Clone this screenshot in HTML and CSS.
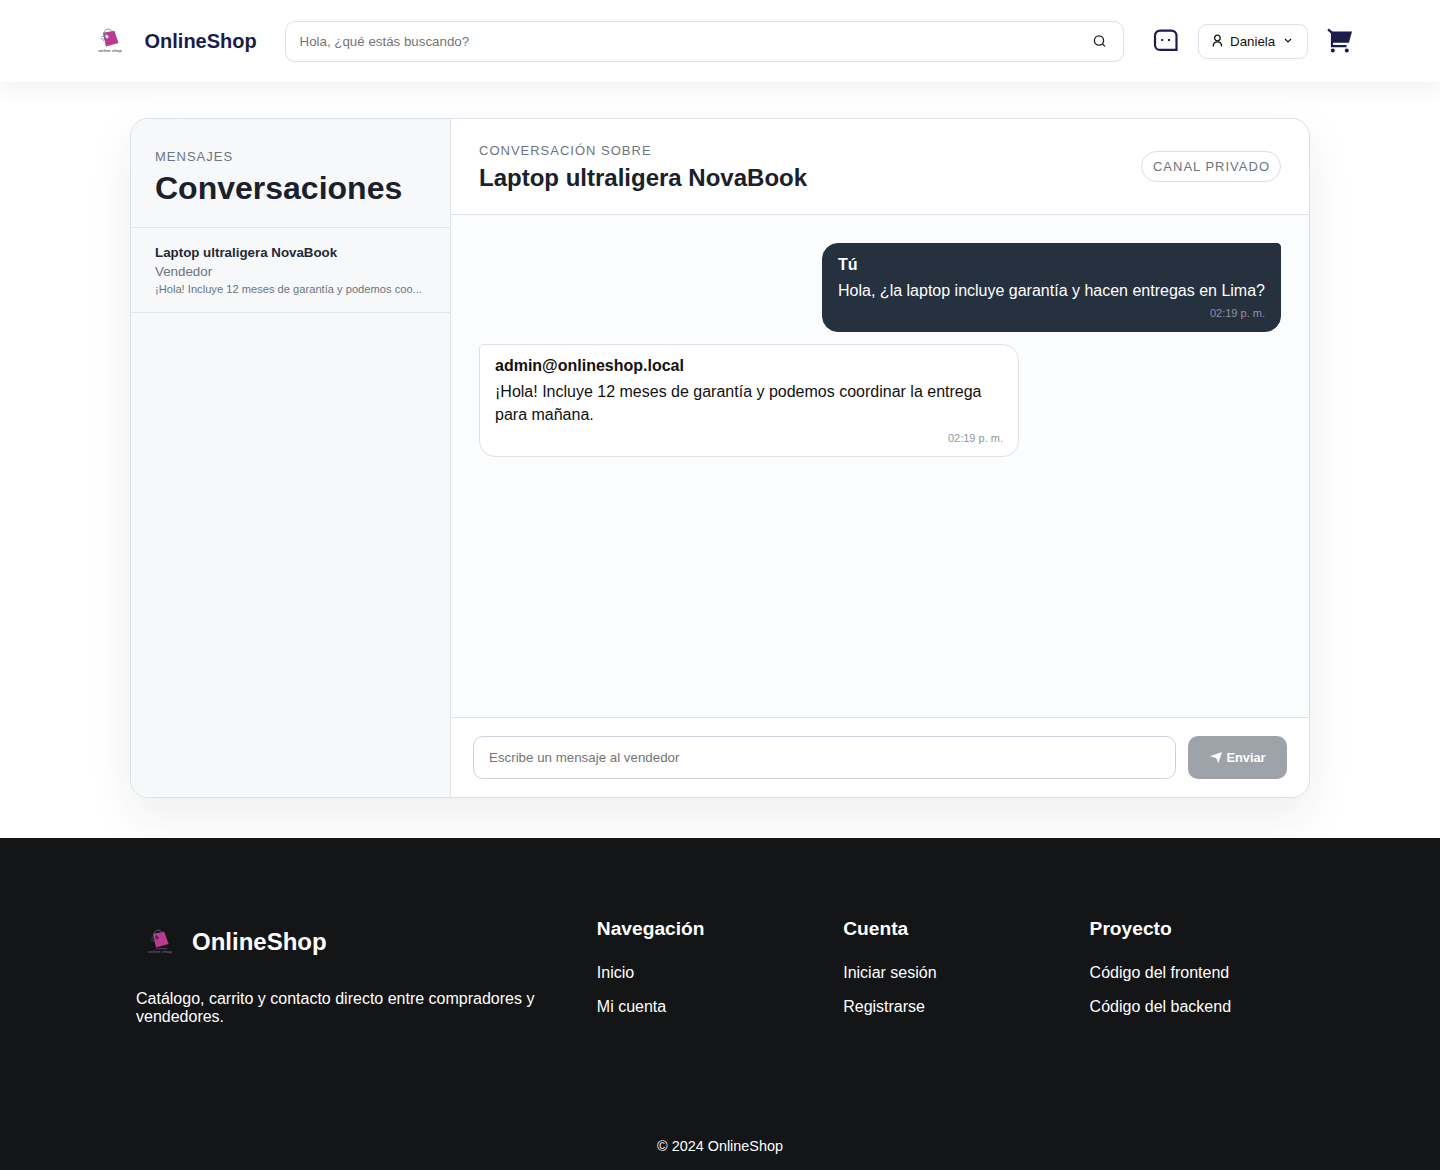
FILE: index.html
```html
<!DOCTYPE html>
<html lang="es">
<head>
    <meta charset="UTF-8">
    <meta name="viewport" content="width=device-width, initial-scale=1.0">
    <title>OnlineShop</title>
    <link rel="stylesheet" href="styles.css">
</head>
<body>
    <header class="navbar">
        <a class="brand" href="#">
            <svg class="logo" viewBox="0 0 40 40">
                <path d="M12.8 11.8 24.3 9.800 28.6 21.900 16 25.600z" fill="#b83b8f"/>
                <path d="M14.200 13.500c-1-6.500 7.200-7 7.800-2" fill="none" stroke="#8d8d99" stroke-width="1"/>
                <path d="M11.500 15.500h4M10.500 18h4M13 20l2-2" fill="none" stroke="#77778c" stroke-width=".7"/>
                <path d="M16 13l3 2.500-2 2.500-2-2.500z" fill="#dcdce4"/>
                <text x="8.300" y="30.500" font-size="4.200" font-weight="bold" textLength="23.500" fill="#66607c">online shop</text>
            </svg>
            <span>OnlineShop</span>
        </a>
        <form class="search">
            <input type="text" placeholder="Hola, ¿qué estás buscando?">
            <svg width="14" height="14" viewBox="0 0 14 14" fill="none" stroke="#18181f" stroke-width="1.300">
                <circle cx="6" cy="6.500" r="4.600"/>
                <path d="M9.400 9.900l2.500 2.500"/>
            </svg>
        </form>
        <a class="chat-link" href="#">
            <svg width="26" height="24" viewBox="0 0 26 24">
                <path d="M7 1.600h11.500a5 5 0 0 1 5 5V20.900H7a5 5 0 0 1-5-5V6.600a5 5 0 0 1 5-5z" fill="none" stroke="#1a1c4b" stroke-width="2.200"/>
                <path d="M8.200 10h2v2h-2zM15 10h2v2h-2z" fill="#1a1c4b"/>
            </svg>
        </a>
        <button class="user-btn">
            <svg width="12" height="14" viewBox="0 0 12 14" fill="none" stroke="#111" stroke-width="1.300">
                <circle cx="5.400" cy="4" r="2.800"/>
                <path d="M1.200 12.500c0-3 1.900-4.700 4.200-4.700s4.200 1.700 4.200 4.700"/>
            </svg>
            <span>Daniela</span>
            <svg class="chevron" width="8" height="6" viewBox="0 0 8 6" fill="none" stroke="#111" stroke-width="1.200">
                <path d="M1 1l3 3 3-3"/>
            </svg>
        </button>
        <a class="cart-link" href="#">
            <svg width="26" height="26" viewBox="0 0 26 26">
                <path d="M1 1.300l4 3.500v13.300h14.500" fill="none" stroke="#1a1c4b" stroke-width="2.200"/>
                <path d="M4 3.500h21l-3.100 11.300H4z" fill="#1a1c4b"/>
                <circle cx="5.800" cy="22.500" r="2" fill="#1a1c4b"/>
                <circle cx="19.800" cy="22.500" r="2" fill="#1a1c4b"/>
            </svg>
        </a>
    </header>

    <main class="chat">
        <aside class="sidebar">
            <div class="sidebar-header">
                <p class="eyebrow">MENSAJES</p>
                <h1>Conversaciones</h1>
            </div>
            <button class="conversation">
                <strong>Laptop ultraligera NovaBook</strong>
                <span>Vendedor</span>
                <small>¡Hola! Incluye 12 meses de garantía y podemos coo...</small>
            </button>
        </aside>
        <section class="panel">
            <div class="panel-header">
                <div>
                    <p class="eyebrow">CONVERSACIÓN SOBRE</p>
                    <h2>Laptop ultraligera NovaBook</h2>
                </div>
                <span class="eyebrow badge">CANAL PRIVADO</span>
            </div>
            <div class="messages">
                <article class="message mine">
                    <strong>Tú</strong>
                    <p>Hola, ¿la laptop incluye garantía y hacen entregas en Lima?</p>
                    <time>02:19 p. m.</time>
                </article>
                <article class="message">
                    <strong>admin@onlineshop.local</strong>
                    <p>¡Hola! Incluye 12 meses de garantía y podemos coordinar la entrega para mañana.</p>
                    <time>02:19 p. m.</time>
                </article>
            </div>
            <form class="composer">
                <input type="text" placeholder="Escribe un mensaje al vendedor">
                <button type="submit" disabled>
                    <svg width="13" height="13" viewBox="0 0 13 13" fill="#fff">
                        <path d="M1 5.200 13 1 9.300 12.300 7.200 7z"/>
                    </svg>
                    <span>Enviar</span>
                </button>
            </form>
        </section>
    </main>

    <footer class="footer">
        <div class="footer-grid">
            <div>
                <div class="footer-brand">
                    <svg class="logo" viewBox="0 0 40 40">
                        <path d="M12.8 11.8 24.3 9.800 28.6 21.900 16 25.600z" fill="#b83b8f"/>
                        <path d="M14.200 13.500c-1-6.500 7.200-7 7.800-2" fill="none" stroke="#5d5d70" stroke-width="1"/>
                        <path d="M11.500 15.500h4M10.500 18h4M13 20l2-2" fill="none" stroke="#5d5d78" stroke-width=".7"/>
                        <path d="M16 13l3 2.500-2 2.500-2-2.500z" fill="#3c3450"/>
                        <path d="M16 26.800l11-.2" stroke="#8a5a80" stroke-width=".6"/>
                        <text x="8.300" y="30.500" font-size="4.200" font-weight="bold" textLength="23.500" fill="#5d5878">online shop</text>
                    </svg>
                    <span>OnlineShop</span>
                </div>
                <p>Catálogo, carrito y contacto directo entre compradores y vendedores.</p>
            </div>
            <div class="footer-col">
                <h3>Navegación</h3>
                <a href="#">Inicio</a>
                <a href="#">Mi cuenta</a>
            </div>
            <div class="footer-col">
                <h3>Cuenta</h3>
                <a href="#">Iniciar sesión</a>
                <a href="#">Registrarse</a>
            </div>
            <div class="footer-col">
                <h3>Proyecto</h3>
                <a href="#">Código del frontend</a>
                <a href="#">Código del backend</a>
            </div>
        </div>
        <p class="copyright">© 2024 OnlineShop</p>
    </footer>
</body>
</html>
```
FILE: styles.css
```css
* {
    margin: 0;
    padding: 0;
    box-sizing: border-box;
}

body {
    background: #fff;
    color: #111;
    font-family: Arial, "Liberation Sans", sans-serif;
    font-size: 16px;
}

a {
    color: inherit;
    text-decoration: none;
}

button,
input {
    font-family: inherit;
    font-size: 13.333px;
}

svg {
    display: block;
    flex-shrink: 0;
}

.logo {
    width: 40px;
    height: 40px;
}

/* Navbar */
.navbar {
    display: flex;
    align-items: center;
    height: 82px;
    padding: 0 87px 0 90px;
    box-shadow: 0 6px 20px rgba(20, 40, 70, 0.07);
}

.brand {
    display: flex;
    align-items: center;
    gap: 14.5px;
    width: 195px;
    color: #1a1c4b;
    font-size: 20px;
    font-weight: bold;
}

.search {
    display: flex;
    align-items: center;
    flex: 1;
    height: 41px;
    padding: 0 16px 0 13.5px;
    border: 1px solid #dcdfe8;
    border-radius: 10px;
}

.search input {
    flex: 1;
    border: 0;
    outline: 0;
    background: none;
}

.chat-link {
    margin-left: 29px;
}

.user-btn {
    display: flex;
    align-items: center;
    width: 110px;
    height: 35px;
    margin: 0 19px;
    padding: 0 13px;
    border: 1px solid #dcdfe8;
    border-radius: 9px;
    background: #fff;
    color: #111;
}

.user-btn span {
    margin-left: 6px;
}

.chevron {
    margin-left: auto;
    margin-right: 2px;
}

.cart-link {
    margin-bottom: 1px;
}

/* Chat card */
.chat {
    display: flex;
    width: 1180px;
    height: 680px;
    margin: 36px auto 40px;
    border: 1px solid #dce0e8;
    border-radius: 18px;
    background: #fff;
    box-shadow: 0 18px 45px rgba(31, 41, 55, 0.08);
    overflow: hidden;
}

.sidebar {
    width: 320px;
    border-right: 1px solid #e1e4eb;
    background: #f7f8fa;
}

.sidebar-header {
    height: 109px;
    padding: 30px 24px 0;
    border-bottom: 1px solid #e1e4eb;
}

.eyebrow {
    color: #6c757d;
    font-size: 13px;
    line-height: 15px;
    letter-spacing: 1px;
}

h1,
h2 {
    color: #1a202c;
}

h1 {
    margin-top: 6px;
    font-size: 32px;
    line-height: 36px;
}

.conversation {
    display: flex;
    flex-direction: column;
    gap: 4px;
    width: 100%;
    height: 85px;
    padding: 17px 24px 0;
    border: 0;
    border-bottom: 1px solid #e1e4eb;
    background: none;
    color: #6c757d;
    text-align: left;
}

.conversation strong {
    color: #1f2937;
}

.conversation small {
    font-size: 11.15px;
    white-space: nowrap;
}

.panel {
    display: flex;
    flex-direction: column;
    flex: 1;
}

.panel-header {
    display: flex;
    align-items: center;
    justify-content: space-between;
    height: 96px;
    padding: 0 28px;
    border-bottom: 1px solid #e1e4eb;
}

.panel-header h2 {
    margin-top: 6px;
    margin-bottom: -2px;
    font-size: 24px;
    line-height: 28px;
}

.badge {
    padding: 7px 10px 7px 10.5px;
    border: 1px solid #dcdde6;
    border-radius: 16px;
}

.messages {
    display: flex;
    flex-direction: column;
    align-items: flex-start;
    gap: 12px;
    flex: 1;
    padding: 28px;
    background: #fbfcfe;
}

.message {
    max-width: 540px;
    padding: 11px 15px;
    border: 1px solid #dde1e6;
    border-radius: 4px 16px 16px 16px;
    background: #fff;
}

.message strong {
    display: block;
    line-height: 20px;
}

.message p {
    margin-top: 4px;
    line-height: 23px;
}

.message time {
    display: block;
    margin-top: 6px;
    color: #8b98a0;
    font-size: 11px;
    line-height: 13px;
    text-align: right;
}

.mine {
    align-self: flex-end;
    border-color: #263140;
    border-radius: 16px 4px 16px 16px;
    background: #263140;
    color: #fff;
}

.mine time {
    margin-top: 5px;
    color: #9290a4;
}

.composer {
    display: flex;
    gap: 12px;
    height: 80px;
    padding: 18px 22px;
    border-top: 1px solid #e1e4eb;
}

.composer input {
    flex: 1;
    padding: 0 15px;
    border: 1px solid #cbd2dc;
    border-radius: 10px;
}

.composer button {
    display: flex;
    align-items: center;
    justify-content: center;
    gap: 4px;
    width: 99px;
    border: 0;
    border-radius: 10px;
    background: #9ea2a9;
    color: #fff;
    font-size: 12.8px;
    font-weight: bold;
}

/* Footer */
.footer {
    height: 332px;
    padding-top: 80px;
    background: #141517;
    color: #fff;
}

.footer-grid {
    display: grid;
    grid-template-columns: 2fr 1fr 1fr 1fr;
    gap: 32px;
    width: 1168px;
    height: 220px;
    margin: 0 auto;
}

.footer-brand {
    display: flex;
    align-items: center;
    gap: 12px;
    margin: 4px 0 28px 4px;
    font-size: 24px;
    font-weight: bold;
}

.footer-col h3 {
    margin-bottom: 25px;
    font-size: 19.2px;
    line-height: 21px;
}

.footer-col a {
    display: block;
    margin-bottom: 16px;
    line-height: 18px;
}

.copyright {
    font-size: 14.4px;
    line-height: 16px;
    text-align: center;
}
```
